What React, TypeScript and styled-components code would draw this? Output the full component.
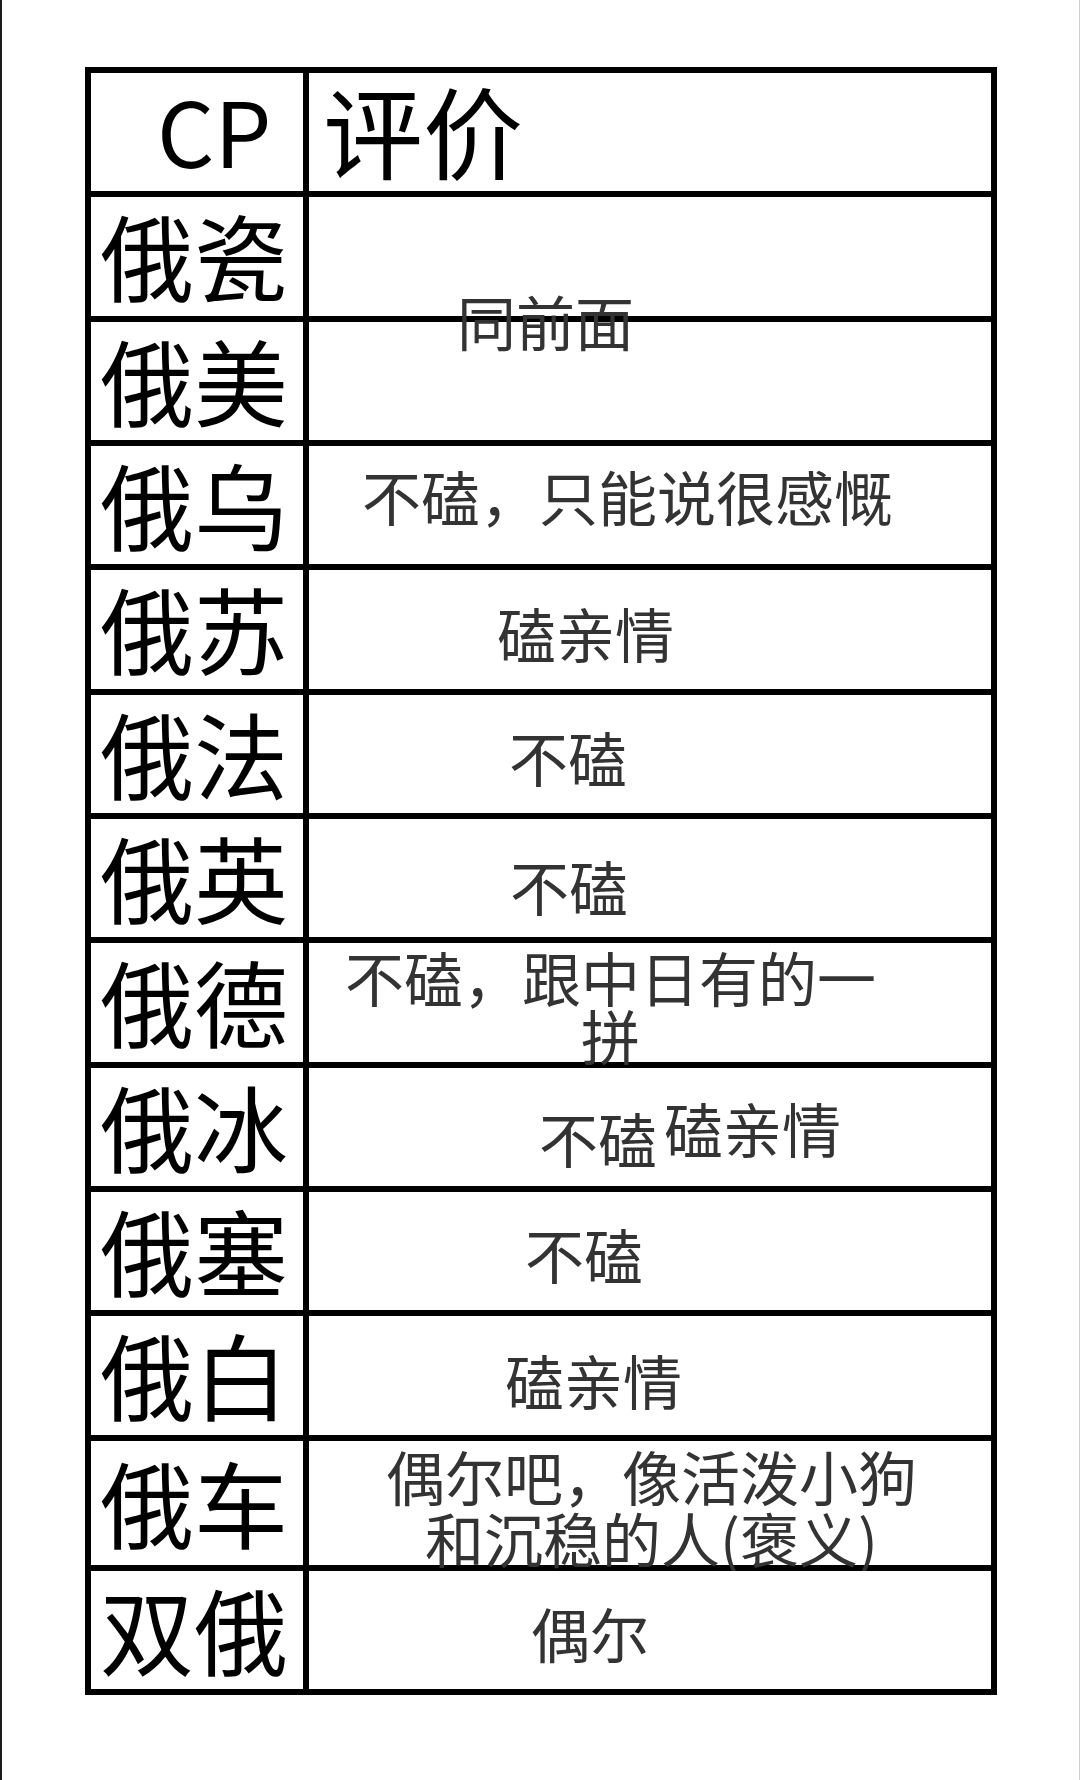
import React from "react";
import styled, { createGlobalStyle } from "styled-components";

const GlobalStyle = createGlobalStyle`
  html, body {
    margin: 0;
    padding: 0;
    background: #ffffff;
  }
  body {
    font-family: "Noto Sans CJK SC", "Noto Sans", sans-serif;
  }
`;

const Page = styled.div`
  box-sizing: border-box;
  width: 1080px;
  height: 1780px;
  border-left: 2px solid #1a1a1a;
  border-right: 1px solid #cfcfcf;
  padding: 67px 0 0 83px;
  background: #ffffff;
`;

const Table = styled.div`
  box-sizing: border-box;
  width: 912px;
  height: 1628px;
  display: grid;
  grid-template-columns: 212px 1fr;
  grid-template-rows: repeat(13, 1fr);
  gap: 6px;
  padding: 6px;
  background: #000000;
`;

const LabelCell = styled.div<{ $pad?: number; $size?: number; $dy?: number }>`
  background: #ffffff;
  display: flex;
  align-items: center;
  padding-left: ${(p) => p.$pad ?? 9}px;
  font-size: ${(p) => p.$size ?? 94}px;
  font-weight: 400;
  line-height: 1;
  color: #000000;
  white-space: nowrap;
  & > span {
    transform: translateY(${(p) => p.$dy ?? -2}px);
  }
`;

const EvalCell = styled.div<{ $pad: number; $span?: boolean }>`
  position: relative;
  background: #ffffff;
  display: flex;
  align-items: center;
  padding-left: ${(p) => p.$pad}px;
  gap: 7px;
  ${(p) => (p.$span ? "grid-row: span 2;" : "")}
  ${(p) =>
    p.$span
      ? `&::before {
    content: "";
    position: absolute;
    left: 0;
    right: 0;
    top: calc(50% - 3px);
    height: 6px;
    background: #000000;
  }`
      : ""}
`;

const EvalText = styled.div<{ $dy: number; $lh?: number }>`
  position: relative;
  font-size: 59px;
  line-height: ${(p) => p.$lh ?? 59}px;
  color: #333333;
  text-align: center;
  white-space: nowrap;
  transform: translateY(${(p) => p.$dy}px);
`;

type Piece = { text: string[]; dy: number; lh?: number };
type Row = { label: string; pad?: number; span?: boolean; skip?: boolean; pieces?: Piece[] };

const rows: Row[] = [
  { label: "俄瓷", span: true, pad: 148, pieces: [{ text: ["同前面"], dy: 2 }] },
  { label: "俄美", skip: true },
  { label: "俄乌", pad: 53, pieces: [{ text: ["不磕，只能说很感慨"], dy: -10 }] },
  { label: "俄苏", pad: 188, pieces: [{ text: ["磕亲情"], dy: 3 }] },
  { label: "俄法", pad: 200, pieces: [{ text: ["不磕"], dy: 3 }] },
  { label: "俄英", pad: 201, pieces: [{ text: ["不磕"], dy: 7 }] },
  { label: "俄德", pad: 36, pieces: [{ text: ["不磕，跟中日有的一", "拼"], dy: 4, lh: 58 }] },
  {
    label: "俄冰",
    pad: 230,
    pieces: [
      { text: ["不磕"], dy: 11 },
      { text: ["磕亲情"], dy: 1 },
    ],
  },
  { label: "俄塞", pad: 216, pieces: [{ text: ["不磕"], dy: 2 }] },
  { label: "俄白", pad: 196, pieces: [{ text: ["磕亲情"], dy: 4 }] },
  { label: "俄车", pad: 77, pieces: [{ text: ["偶尔吧，像活泼小狗", "和沉稳的人(褒义)"], dy: 4, lh: 62 }] },
  { label: "双俄", pad: 222, pieces: [{ text: ["偶尔"], dy: 3 }] },
];

export default function App() {
  return (
    <>
      <GlobalStyle />
      <Page>
        <Table>
          <LabelCell $pad={66} $size={90} $dy={-3}>
            <span>CP</span>
          </LabelCell>
          <LabelCell $pad={14} $size={100} $dy={-3}>
            <span>评价</span>
          </LabelCell>
          {rows.map((r) => (
            <React.Fragment key={r.label}>
              <LabelCell>
                <span>{r.label}</span>
              </LabelCell>
              {!r.skip && (
                <EvalCell $pad={r.pad ?? 0} $span={r.span}>
                  {r.pieces?.map((p, i) => (
                    <EvalText key={i} $dy={p.dy} $lh={p.lh}>
                      {p.text.map((t, j) => (
                        <div key={j}>{t}</div>
                      ))}
                    </EvalText>
                  ))}
                </EvalCell>
              )}
            </React.Fragment>
          ))}
        </Table>
      </Page>
    </>
  );
}
